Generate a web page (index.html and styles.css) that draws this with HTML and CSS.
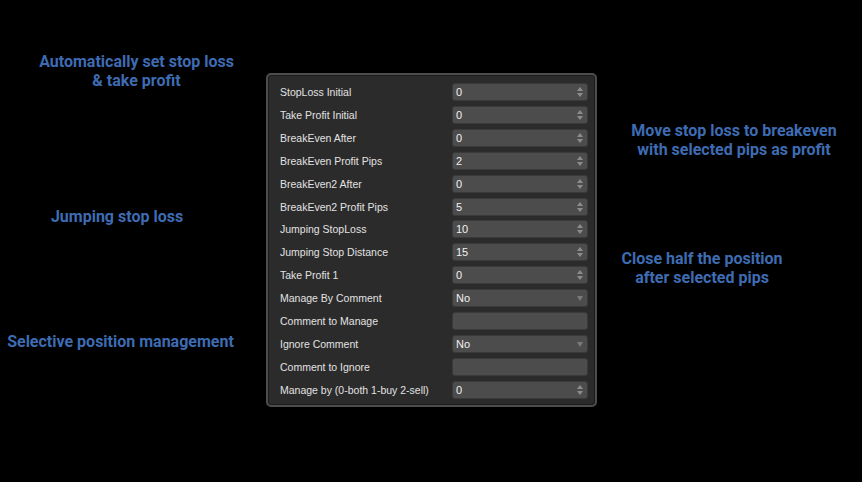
FILE: index.html
```html
<!DOCTYPE html>
<html>
<head>
<meta charset="utf-8">
<link rel="stylesheet" href="styles.css">
</head>
<body>
<div class="stage">
  <div class="notes notes-left">
    <p class="note n-auto">Automatically set stop loss<br>&amp; take profit</p>
    <p class="note n-jump">Jumping stop loss</p>
    <p class="note n-sel">Selective position management</p>
  </div>
  <div class="panel">
    <div class="row"><span class="lbl">StopLoss Initial</span><span class="inp spin">0</span></div>
    <div class="row"><span class="lbl">Take Profit Initial</span><span class="inp spin">0</span></div>
    <div class="row"><span class="lbl">BreakEven After</span><span class="inp spin">0</span></div>
    <div class="row"><span class="lbl">BreakEven Profit Pips</span><span class="inp spin">2</span></div>
    <div class="row"><span class="lbl">BreakEven2 After</span><span class="inp spin">0</span></div>
    <div class="row"><span class="lbl">BreakEven2 Profit Pips</span><span class="inp spin">5</span></div>
    <div class="row"><span class="lbl">Jumping StopLoss</span><span class="inp spin">10</span></div>
    <div class="row"><span class="lbl">Jumping Stop Distance</span><span class="inp spin">15</span></div>
    <div class="row"><span class="lbl">Take Profit 1</span><span class="inp spin">0</span></div>
    <div class="row"><span class="lbl">Manage By Comment</span><span class="inp drop">No</span></div>
    <div class="row"><span class="lbl">Comment to Manage</span><span class="inp"></span></div>
    <div class="row"><span class="lbl">Ignore Comment</span><span class="inp drop">No</span></div>
    <div class="row"><span class="lbl">Comment to Ignore</span><span class="inp"></span></div>
    <div class="row"><span class="lbl">Manage by (0-both 1-buy 2-sell)</span><span class="inp spin">0</span></div>
  </div>
  <div class="notes notes-right">
    <p class="note n-move">Move stop loss to breakeven<br>with selected pips as profit</p>
    <p class="note n-close">Close half the position<br>after selected pips</p>
  </div>
</div>
</body>
</html>
```
FILE: styles.css
```css
* { box-sizing: border-box; }
html, body { margin: 0; padding: 0; background: #000; }
body { width: 862px; height: 482px; overflow: hidden; }

.stage {
  display: grid;
  grid-template-columns: 266px 331px 1fr;
  padding-top: 73px;
}

.notes { position: relative; }
.note {
  margin: 0;
  font-family: Roboto, "Liberation Sans", sans-serif;
  font-weight: 700;
  font-size: 16px;
  line-height: 19px;
  color: #3e6cb3;
  text-align: center;
  white-space: nowrap;
}
.n-auto { margin: -21px 0 0 10px; width: 253px; }
.n-jump { margin: 117px 0 0 0; width: 234px; }
.n-sel  { margin: 106px 0 0 0; width: 241px; }

.n-move  { margin: 48px 0 0 0; width: 274px; }
.n-close { margin: 90px 0 0 0; width: 210px; }

.panel {
  width: 331px;
  height: 334px;
  background: #2b2b2b;
  border: 2px solid #4d4d4d;
  border-radius: 5px;
  box-shadow: inset 0 0 0 1px #1c1c1c;
  padding: 8px 7px 0 12px;
  display: flex;
  flex-direction: column;
  gap: 4.92px;
}

.row {
  display: flex;
  align-items: center;
  height: 18px;
}
.lbl {
  width: 172px;
  font-family: "Liberation Sans", Arial, sans-serif;
  font-size: 10.5px;
  color: #e2e2e2;
}
.inp {
  position: relative;
  width: 136px;
  height: 18px;
  background: #4c4c4c;
  border: 1px solid #3a3a3a;
  border-radius: 3px;
  font-family: "Liberation Sans", Arial, sans-serif;
  font-size: 11px;
  line-height: 16px;
  color: #f0f0f0;
  padding-left: 3px;
}
.spin::before, .spin::after {
  content: "";
  position: absolute;
  right: 4px;
  width: 0; height: 0;
  border-left: 3px solid transparent;
  border-right: 3px solid transparent;
}
.spin::before { top: 3px; border-bottom: 4px solid #8c8c8c; }
.spin::after { bottom: 3px; border-top: 4px solid #8c8c8c; }
.drop::after {
  content: "";
  position: absolute;
  right: 4px;
  top: 6px;
  border-left: 3px solid transparent;
  border-right: 3px solid transparent;
  border-top: 5px solid #7a7a7a;
}
```
